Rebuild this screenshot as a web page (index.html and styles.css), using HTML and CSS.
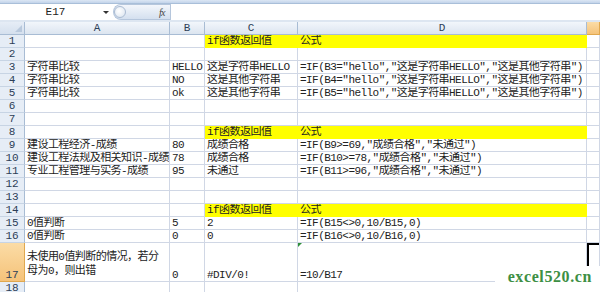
FILE: index.html
```html
<!doctype html>
<html>

<head>
  <title>if函数</title>
  <link rel="stylesheet" href="styles.css">
</head>

<body>
  <div class="ribbon-edge"></div>

  <!-- formula bar -->
  <div class="formula-bar">
    <div class="name-box">
      <span class="name-text">E17</span>
      <span class="name-arrow"></span>
    </div>
    <div class="fx-pill">
      <span class="fx-knob"></span>
      <span class="fx-label">fx</span>
    </div>
    <div class="formula-input"></div>
  </div>
  <div class="bar-gap"></div>

  <div class="sheet">
    <div class="row head">
      <div class="ch corner"></div>
      <div class="ch">A</div>
      <div class="ch">B</div>
      <div class="ch">C</div>
      <div class="ch">D</div>
      <div class="ch sel"></div>
    </div>

    <div class="row">
      <div class="rh">1</div>
      <div class="cell"></div>
      <div class="cell"></div>
      <div class="cell hl">if函数返回值</div>
      <div class="cell hl">公式</div>
      <div class="cell"></div>
    </div>
    <div class="row">
      <div class="rh">2</div>
      <div class="cell"></div>
      <div class="cell"></div>
      <div class="cell"></div>
      <div class="cell"></div>
      <div class="cell"></div>
    </div>
    <div class="row">
      <div class="rh">3</div>
      <div class="cell">字符串比较</div>
      <div class="cell">HELLO</div>
      <div class="cell">这是字符串HELLO</div>
      <div class="cell">=IF(B3="hello","这是字符串HELLO","这是其他字符串")</div>
      <div class="cell"></div>
    </div>
    <div class="row">
      <div class="rh">4</div>
      <div class="cell">字符串比较</div>
      <div class="cell">NO</div>
      <div class="cell">这是其他字符串</div>
      <div class="cell">=IF(B4="hello","这是字符串HELLO","这是其他字符串")</div>
      <div class="cell"></div>
    </div>
    <div class="row">
      <div class="rh">5</div>
      <div class="cell">字符串比较</div>
      <div class="cell">ok</div>
      <div class="cell">这是其他字符串</div>
      <div class="cell">=IF(B5="hello","这是字符串HELLO","这是其他字符串")</div>
      <div class="cell"></div>
    </div>
    <div class="row">
      <div class="rh">6</div>
      <div class="cell"></div>
      <div class="cell"></div>
      <div class="cell"></div>
      <div class="cell"></div>
      <div class="cell"></div>
    </div>
    <div class="row">
      <div class="rh">7</div>
      <div class="cell"></div>
      <div class="cell"></div>
      <div class="cell"></div>
      <div class="cell"></div>
      <div class="cell"></div>
    </div>
    <div class="row">
      <div class="rh">8</div>
      <div class="cell"></div>
      <div class="cell"></div>
      <div class="cell hl">if函数返回值</div>
      <div class="cell hl">公式</div>
      <div class="cell"></div>
    </div>
    <div class="row">
      <div class="rh">9</div>
      <div class="cell">建设工程经济-成绩</div>
      <div class="cell">80</div>
      <div class="cell">成绩合格</div>
      <div class="cell">=IF(B9&gt;=69,"成绩合格","未通过")</div>
      <div class="cell"></div>
    </div>
    <div class="row">
      <div class="rh">10</div>
      <div class="cell">建设工程法规及相关知识-成绩</div>
      <div class="cell">78</div>
      <div class="cell">成绩合格</div>
      <div class="cell">=IF(B10&gt;=78,"成绩合格","未通过")</div>
      <div class="cell"></div>
    </div>
    <div class="row">
      <div class="rh">11</div>
      <div class="cell">专业工程管理与实务-成绩</div>
      <div class="cell">95</div>
      <div class="cell">未通过</div>
      <div class="cell">=IF(B11&gt;=96,"成绩合格","未通过")</div>
      <div class="cell"></div>
    </div>
    <div class="row">
      <div class="rh">12</div>
      <div class="cell"></div>
      <div class="cell"></div>
      <div class="cell"></div>
      <div class="cell"></div>
      <div class="cell"></div>
    </div>
    <div class="row">
      <div class="rh">13</div>
      <div class="cell"></div>
      <div class="cell"></div>
      <div class="cell"></div>
      <div class="cell"></div>
      <div class="cell"></div>
    </div>
    <div class="row">
      <div class="rh">14</div>
      <div class="cell"></div>
      <div class="cell"></div>
      <div class="cell hl">if函数返回值</div>
      <div class="cell hl">公式</div>
      <div class="cell"></div>
    </div>
    <div class="row">
      <div class="rh">15</div>
      <div class="cell">0值判断</div>
      <div class="cell">5</div>
      <div class="cell">2</div>
      <div class="cell">=IF(B15&lt;&gt;0,10/B15,0)</div>
      <div class="cell"></div>
    </div>
    <div class="row">
      <div class="rh">16</div>
      <div class="cell">0值判断</div>
      <div class="cell">0</div>
      <div class="cell">0</div>
      <div class="cell">=IF(B16&lt;&gt;0,10/B16,0)</div>
      <div class="cell"></div>
    </div>
    <div class="row tall">
      <div class="rh sel">17</div>
      <div class="cell wrap">未使用0值判断的情况，若分<br>母为0，则出错</div>
      <div class="cell">0</div>
      <div class="cell">#DIV/0!</div>
      <div class="cell err">=10/B17</div>
      <div class="cell active"></div>
    </div>
    <div class="row">
      <div class="rh">18</div>
      <div class="cell"></div>
      <div class="cell"></div>
      <div class="cell"></div>
      <div class="cell"></div>
      <div class="cell"></div>
    </div>
  </div>

  <div class="watermark">excel520.cn</div>
</body>

</html>
```

FILE: styles.css
```css
body {
  margin: 0;
  font-family: "Liberation Mono", "Noto Sans CJK SC", monospace;
  font-size: 11px;
  letter-spacing: -0.55px;
  color: #222;
  background: #fff;
  overflow: hidden;
}

/* bottom edge of the ribbon */
.ribbon-edge {
  height: 4px;
  box-sizing: border-box;
  background: linear-gradient(#dce7f4, #c2d3ea);
  border-bottom: 1px solid #a9bfd9;
}

/* formula bar */
.formula-bar {
  display: flex;
  height: 16px;
  background: #fff;
}

.name-box {
  width: 113px;
  display: flex;
  align-items: center;
  box-sizing: border-box;
}

.name-text {
  flex: 1;
  text-align: center;
  padding-left: 8px;
  letter-spacing: 0;
}

.name-arrow {
  width: 0;
  height: 0;
  margin-right: 4px;
  border-left: 3px solid transparent;
  border-right: 3px solid transparent;
  border-top: 3px solid #333;
}

.fx-pill {
  width: 57px;
  display: flex;
  align-items: center;
  justify-content: space-between;
  box-sizing: border-box;
  border-radius: 8px 0 0 8px;
  border: 1px solid #b5c6dc;
  border-right: none;
  background: linear-gradient(#f3f6fb, #d4e0ef);
}

.fx-knob {
  width: 12px;
  height: 12px;
  border-radius: 50%;
  border: 1px solid #aabbd2;
  background: radial-gradient(circle at 40% 40%, #ffffff, #d8e2ee);
  box-sizing: border-box;
}

.fx-label {
  font-family: "Liberation Serif", serif;
  font-style: italic;
  font-size: 10px;
  color: #444;
  margin-right: 5px;
}

.formula-input {
  flex: 1;
  box-sizing: border-box;
  border-left: 1px solid #b5c6dc;
}

.bar-gap {
  height: 2px;
  background: #dde6f1;
}

/* grid */
.row {
  display: grid;
  grid-template-columns: 25px 145px 35px 93px 289px 1fr;
  height: 13px;
}

.row.tall {
  height: 39px;
}

.cell {
  position: relative;
  display: flex;
  align-items: flex-end;
  box-sizing: border-box;
  padding: 0 2px;
  border-right: 1px solid #d0d7e5;
  border-bottom: 1px solid #d0d7e5;
  white-space: nowrap;
  overflow: hidden;
  line-height: 12px;
}

.cell.wrap {
  padding-bottom: 3px;
  line-height: 14px;
}

.cell.hl {
  background: #ffff00;
  border-color: #ffff00;
}

.cell.active {
  box-shadow: inset 2px 2px 0 #000;
}

/* error check marker */
.cell.err::before {
  content: "";
  position: absolute;
  top: 0;
  left: 0;
  border-top: 4px solid #2f8f3a;
  border-right: 4px solid transparent;
}

.ch,
.rh {
  display: flex;
  align-items: center;
  justify-content: center;
  box-sizing: border-box;
  color: #2c3e57;
  background: linear-gradient(#f2f6fb, #dce5f0);
  border-right: 1px solid #a8bcd4;
  border-bottom: 1px solid #a8bcd4;
  line-height: 12px;
  letter-spacing: 0;
}

.rh {
  background: #e6edf6;
  border-bottom-color: #c7d4e4;
  align-items: flex-end;
}

.ch.sel,
.rh.sel {
  background: linear-gradient(#fbdca6, #f5c37a);
  border-color: #e0a84f;
}

.ch.corner {
  position: relative;
  background: linear-gradient(#e6edf6, #d5e0ee);
}

.ch.corner::after {
  content: "";
  position: absolute;
  right: 2px;
  bottom: 2px;
  border-bottom: 7px solid #b9c9dd;
  border-left: 7px solid transparent;
}

.watermark {
  position: absolute;
  right: 0;
  bottom: 0;
  width: 105px;
  height: 26px;
  padding-right: 8px;
  box-sizing: border-box;
  background: #fff;
  text-align: right;
  font-family: "Liberation Serif", serif;
  font-weight: bold;
  font-size: 16px;
  letter-spacing: 0.6px;
  line-height: 22px;
  color: #3d8f44;
}
```
